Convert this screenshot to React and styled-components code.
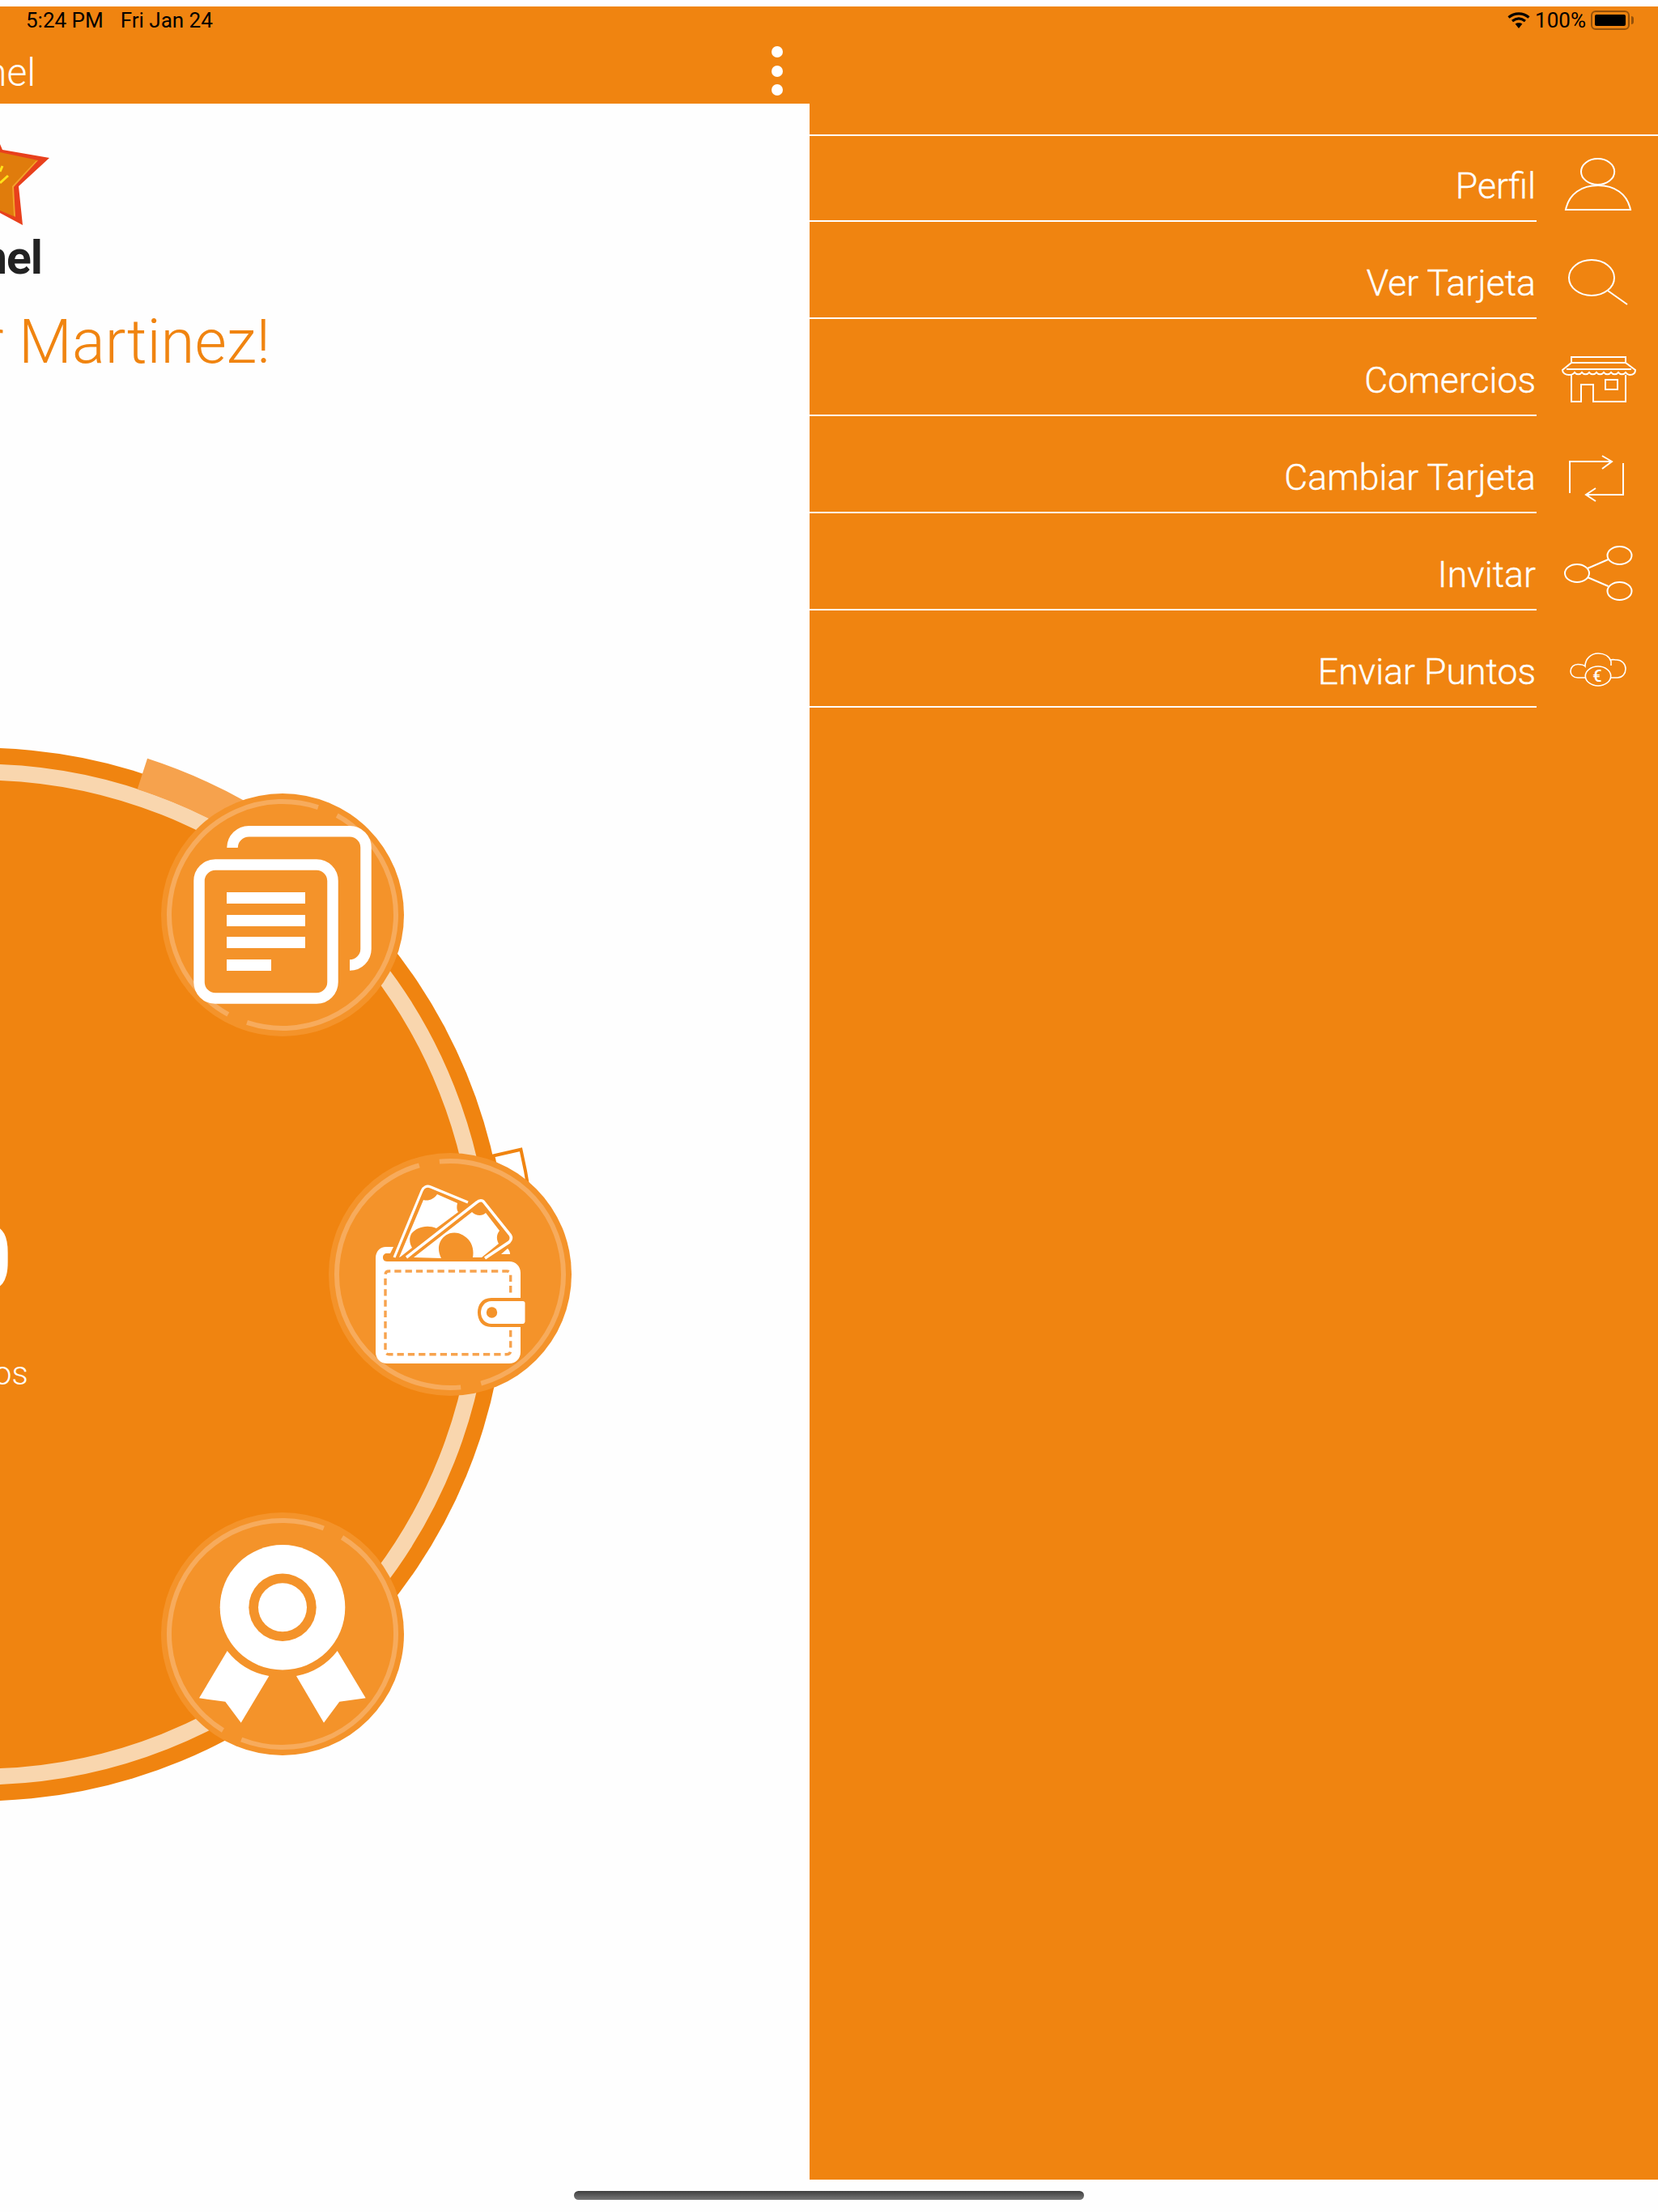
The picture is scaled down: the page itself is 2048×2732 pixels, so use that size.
import React from "react";
import styled, { createGlobalStyle } from "styled-components";

const ORANGE = "#f08410";
const BADGE = "#f4932a";

const Global = createGlobalStyle`
  html, body { margin: 0; padding: 0; background: #fff; }
  * { box-sizing: border-box; }
`;

const Page = styled.div`
  width: 2048px;
  height: 2732px;
  padding-top: 8px;
  background: #fefefe;
  font-family: Roboto, "Liberation Sans", sans-serif;
  overflow: hidden;
`;
const Shell = styled.div`
  height: 2684px;
  background: ${ORANGE};
  display: flex;
  flex-direction: column;
`;
const StatusBar = styled.div`
  height: 34px;
  padding: 0 35px 0 32px;
  display: flex;
  align-items: center;
  justify-content: space-between;
  color: #000;
  font-size: 26px;
  line-height: 32px;
`;
const StatusGroup = styled.div`
  display: flex;
  align-items: center;
  gap: ${(p) => p.$gap}px;
`;
const Battery = styled.div`
  position: relative;
  width: 48px;
  height: 24px;
  padding: 3px;
  border: 2px solid rgba(0, 0, 0, 0.38);
  border-radius: 6px;
  &::before {
    content: "";
    display: block;
    height: 100%;
    background: #000;
    border-radius: 2px;
  }
  &::after {
    content: "";
    position: absolute;
    right: -7px;
    top: 5px;
    width: 3px;
    height: 10px;
    background: rgba(0, 0, 0, 0.38);
    border-radius: 0 3px 3px 0;
  }
`;
const Body = styled.div`
  flex: 1;
  min-height: 0;
  display: grid;
  grid-template-columns: 1000px 1048px;
`;
const LeftPane = styled.div`
  display: flex;
  flex-direction: column;
  overflow: hidden;
`;
const AppBar = styled.div`
  height: 86px;
  flex: none;
  padding: 5px 33px 0 0;
  display: flex;
  align-items: center;
  justify-content: space-between;
`;
const AppTitle = styled.div`
  margin: 4px 0 0 -18px;
  font-size: 48px;
  font-weight: 300;
  line-height: 76px;
  color: #fff;
`;
const Kebab = styled.div`
  display: flex;
  flex-direction: column;
  gap: 9.5px;
`;
const Dot = styled.span`
  display: block;
  width: 14px;
  height: 14px;
  border-radius: 50%;
  background: #fff;
`;
const Content = styled.div`
  position: relative;
  flex: 1;
  background: #fefefe;
  overflow: hidden;
`;
const Logo = styled.svg`
  display: block;
  width: 64px;
  height: 110px;
  margin-top: 42px;
`;
const Brand = styled.div`
  margin: 14px 0 0 -23px;
  height: 50px;
  font-size: 57px;
  font-weight: 700;
  line-height: 50px;
  letter-spacing: -1px;
  color: #222;
`;
const Greeting = styled.h1`
  margin: 33px 0 0 -21px;
  font-size: 76px;
  font-weight: 300;
  line-height: 90px;
  color: ${ORANGE};
  white-space: nowrap;
`;
const Dial = styled.div`
  position: absolute;
  left: 0;
  top: 654px;
  width: 720px;
  height: 1450px;
`;
const DialArt = styled.svg`
  display: block;
  width: 720px;
  height: 1450px;
`;
const Points = styled.div`
  position: absolute;
  left: -46px;
  top: 717px;
  font-size: 110px;
  font-weight: 400;
  line-height: 112px;
  color: #fff;
`;
const PointsLabel = styled.div`
  position: absolute;
  left: -8px;
  top: 893px;
  font-size: 40px;
  font-weight: 300;
  line-height: 44px;
  color: #fff;
`;
const Drawer = styled.nav`
  padding-top: 124px;
`;
const TopRule = styled.div`
  height: 2px;
  background: #fff;
`;
const MenuRow = styled.div`
  display: grid;
  grid-template-columns: 898px 150px;
  height: ${(p) => (p.$first ? 106 : 120)}px;
`;
const MenuLabel = styled.div`
  display: flex;
  align-items: flex-end;
  justify-content: flex-end;
  padding: 0 1px 16px 0;
  border-bottom: 2px solid #fff;
  font-size: 44.6px;
  font-weight: 300;
  line-height: 52px;
  color: #fff;
  -webkit-text-stroke: 0.35px #fff;
`;
const MenuIcon = styled.svg`
  display: block;
  width: 150px;
  height: 120px;
  margin-top: ${(p) => (p.$first ? -14 : 0)}px;
  fill: none;
  stroke: #fff;
  stroke-width: 2;
`;
const IconGlyph = styled.text`
  fill: #fff;
  stroke: none;
  font-family: Roboto, sans-serif;
  font-size: 20px;
  font-weight: 500;
  text-anchor: middle;
`;
const HomeBar = styled.div`
  width: 630px;
  height: 11px;
  margin: 14px auto 0;
  border-radius: 6px;
  background: linear-gradient(#3e3e3e, #777);
`;

const icons = {
  perfil: (
    <>
      <ellipse cx="75.6" cy="58" rx="20.6" ry="16" />
      <path d="M36 105 C40 85 56 75 76 75 C96 75 112 85 116 105 Z" />
    </>
  ),
  tarjeta: (
    <>
      <ellipse cx="68" cy="69" rx="28" ry="22" />
      <path d="M88 85 L112 102" />
    </>
  ),
  comercios: (
    <>
      <path d="M43 53 V47 H110 V53" />
      <path d="M43 54 H110 L122 63 C122 67 119 69 115 69 C112 69 111 67 110 66 C108 69 103 69 101 66 C99 69 94 69 92 66 C90 69 85 69 83 66 C81 69 76 69 74 66 C72 69 67 69 65 66 C63 69 58 69 56 66 C54 69 49 69 47 66 C45 69 42 69 40 69 C36 69 32 67 32 63 Z" />
      <path d="M37 62 H117" />
      <path d="M43 69 V102 H55 V81 H70 V102 H110 V69" />
      <rect x="85" y="75" width="15" height="12" />
    </>
  ),
  cambiar: (
    <>
      <path d="M41 95 V56 H93 M81 49 L93 56 L81 65" />
      <path d="M107 58 V97 H61 M73 89 L61 97 L73 105" />
    </>
  ),
  invitar: (
    <>
      <ellipse cx="102.5" cy="52" rx="15" ry="11" />
      <ellipse cx="50" cy="74" rx="15" ry="11" />
      <ellipse cx="102.5" cy="96" rx="15" ry="11" />
      <path d="M63 68 L88.5 57 M63 79 L88.5 90" />
    </>
  ),
  puntos: (
    <g strokeWidth="1.6">
      <path d="M60 83 H51 C45 83 42 79 42 75 C42 70 46 66.5 51 66.5 C54 66.5 58 67 60 69 C60 60 67 53 76 53 C84 53 90 57 92 63 V68 M92 61 C94 60 96 61 99 61 C105 61 110 66 110 72 C110 78 106 83 100 83 H91" />
      <ellipse cx="76" cy="81" rx="15.7" ry="12" />
      <IconGlyph x="75" y="88">€</IconGlyph>
    </g>
  ),
};

const rows = [
  ["Perfil", "perfil"],
  ["Ver Tarjeta", "tarjeta"],
  ["Comercios", "comercios"],
  ["Cambiar Tarjeta", "cambiar"],
  ["Invitar", "invitar"],
  ["Enviar Puntos", "puntos"],
];

const polar = (cx, cy, r, deg) => {
  const a = (deg * Math.PI) / 180;
  return [cx + r * Math.sin(a), cy - r * Math.cos(a)];
};

const RingArcs = ({ cx, cy, gap }) => {
  const r = 140;
  const half = 5.2;
  const p = (d) => polar(cx, cy, r, d).map((v) => v.toFixed(2)).join(" ");
  return (
    <g fill="none" stroke="#f7ab5c" strokeWidth="6">
      <path d={`M${p(gap + half)} A${r} ${r} 0 0 1 ${p(gap + 180 - half)}`} />
      <path d={`M${p(gap + 180 + half)} A${r} ${r} 0 0 1 ${p(gap + 360 - half)}`} />
    </g>
  );
};

const Badge = ({ cx, cy, gap, children }) => (
  <g>
    <circle cx={cx} cy={cy} r="150" fill={BADGE} />
    <RingArcs cx={cx} cy={cy} gap={gap} />
    <g transform={`translate(${cx - 150} ${cy - 150})`}>{children}</g>
  </g>
);

const DocIcon = () => (
  <g>
    <g fill="none" stroke="#fff" strokeWidth="13.5">
      <path d="M88 67 A20.5 20.5 0 0 1 108.5 46.7 H233 A20 20 0 0 1 253 67 V192 A20 20 0 0 1 233 212" />
      <rect x="47" y="88" width="165" height="165" rx="20" />
    </g>
    <g fill="#fff">
      <rect x="81" y="122" width="97" height="14" />
      <rect x="81" y="150" width="97" height="14" />
      <rect x="81" y="177" width="97" height="14" />
      <rect x="81" y="205" width="55" height="14" />
    </g>
  </g>
);

const WalletIcon = () => (
  <g>
    <path
      fill="#fff"
      d="M80 116 H71 C63 116 58 122 58 130 V246 C58 254 64 260 72 260 H223 C231 260 237 254 237 246 V215 H201 C189 215 184 206 184 197 C184 188 189 179 201 179 H237 V148 C237 140 231 134 223 134 H72 C68 134 67 131 67 129 C67 126 69 124 72 124 H76 Z"
    />
    <path
      fill="#fff"
      d="M201 183 H240 C241.5 183 242.5 184 242.5 185.5 V208 C242.5 209.5 241.5 211 240 211 H201 C193 211 188 204 188 197 C188 190 193 183 201 183 Z"
    />
    <circle cx="201.5" cy="197" r="6.7" fill={BADGE} />
    <path
      fill="none"
      stroke="#f7a34e"
      strokeWidth="3.4"
      strokeDasharray="8.3 5"
      d="M224.7 219 V244 Q224.7 248.7 220 248.7 H74.5 Q70 248.7 70 244 V150.5 Q70 146 74.5 146 H220 Q224.7 146 224.7 150.5 V175"
    />
    <path
      fill="none"
      stroke="#fff"
      strokeWidth="3.2"
      d="M81 129 L115 47 C117 42 121 40 126 42 L172 61"
    />
    <path
      fill="#fff"
      d="M87 129 L117 58 C123 60 130 57 134 51 L159 62 C158 66 158 70 160 73 L133 93 C121 88 108 92 102 100 C99 106 100 112 103 117 L89 128 Z"
    />
    <path
      fill="none"
      stroke="#fff"
      strokeWidth="3.6"
      d="M96 129 L183 61 C186 58 190 58 192 61 L224 101 C226 104 226 107 223 110 L193 130"
    />
    <path
      fill="#fff"
      d="M105 129 L177 73 C182 78 190 78 194 74 L211 96 C207 101 207 107 210 112 L189 129 H178 C180 118 176 108 168 103 C160 97 150 97 143 103 C135 110 134 120 139 130 Z"
    />
    <path fill="#fff" d="M213 125 L221 118 C223 120 224 122 224 125 Z" />
  </g>
);

const MedalIcon = () => (
  <g>
    <circle cx="150" cy="117.3" r="77.3" fill="#fff" />
    <circle cx="150" cy="117.3" r="41.7" fill={BADGE} />
    <circle cx="150" cy="117.3" r="30" fill="#fff" />
    <path
      fill="#fff"
      d="M81.7 171 L47 229.3 L79.3 233.7 L98.7 259.7 L133.3 202 A84 84 0 0 1 81.7 171 Z"
    />
    <path
      fill="#fff"
      d="M217.7 171 L252.7 229.3 L220.3 233.7 L201 259.7 L167 202 A84 84 0 0 0 217.7 171 Z"
    />
  </g>
);

const Ribbon = () => {
  const [ax, ay] = polar(-25, 792, 630, 18);
  const [bx, by] = polar(-25, 792, 670, 18);
  const [cx, cy] = polar(-25, 792, 670, 38);
  const [dx, dy] = polar(-25, 792, 630, 38);
  return (
    <path
      fill="#f6a24d"
      d={`M${ax} ${ay} L${bx} ${by} A670 670 0 0 1 ${cx} ${cy} L${dx} ${dy} A630 630 0 0 0 ${ax} ${ay} Z`}
    />
  );
};

const WhiteTab = () => {
  const [ax, ay] = polar(-25, 792, 651, 77);
  const [bx, by] = polar(-25, 792, 686, 77);
  const [cx, cy] = polar(-25, 792, 686, 88);
  const [dx, dy] = polar(-25, 792, 651, 88);
  return (
    <path
      fill="#fff"
      stroke={ORANGE}
      strokeWidth="4"
      d={`M${ax} ${ay} L${bx} ${by} A686 686 0 0 1 ${cx} ${cy} L${dx} ${dy} A651 651 0 0 0 ${ax} ${ay} Z`}
    />
  );
};

export default function App() {
  return (
    <>
      <Global />
      <Page>
        <Shell>
          <StatusBar>
            <StatusGroup $gap={21}>
              <span>5:24 PM</span>
              <span>Fri Jan 24</span>
            </StatusGroup>
            <StatusGroup $gap={6}>
              <svg width="28" height="20" viewBox="0 0 28 20">
                <g fill="none" stroke="#000" strokeWidth="3.2">
                  <path d="M1.5 6.5 C9 0.2 19 0.2 26.5 6.5" />
                  <path d="M6 11 C11 7 17 7 22 11" />
                </g>
                <path d="M9.6 14.6 C12 12.8 16 12.8 18.4 14.6 L14 20 Z" fill="#000" />
              </svg>
              <span>100%</span>
              <Battery />
            </StatusGroup>
          </StatusBar>
          <Body>
            <LeftPane>
              <AppBar>
                <AppTitle>nel</AppTitle>
                <Kebab>
                  <Dot />
                  <Dot />
                  <Dot />
                </Kebab>
              </AppBar>
              <Content>
                <Logo viewBox="0 0 64 110">
                  <path d="M0 8 L3 15 L61 25 L23 60 L28 108 L0 93 Z" fill="#e8401c" />
                  <path d="M0 18 L47 28 L15 60 L19 98 L0 90 Z" fill="#e07c0c" />
                  <path d="M15 60 L44 29 L47 28 L17 61 L19 98 L17 96 Z" fill="#f3a32a" />
                  <path d="M0 42 L3 35 M0 56 L10 47" stroke="#ffe21a" strokeWidth="3" fill="none" />
                </Logo>
                <Brand>nel</Brand>
                <Greeting>r Martinez!</Greeting>
                <Dial>
                  <DialArt viewBox="0 0 720 1450">
                    <WhiteTab />
                    <circle cx="-25" cy="792" r="650.5" fill={ORANGE} />
                    <circle cx="-25" cy="792" r="620.5" fill="none" stroke="#f9d6ae" strokeWidth="20" />
                    <Ribbon />
                    <Badge cx={349} cy={348} gap={23.5}>
                      <DocIcon />
                    </Badge>
                    <Badge cx={556} cy={792} gap={-10.6}>
                      <WalletIcon />
                    </Badge>
                    <Badge cx={349} cy={1236} gap={26.5}>
                      <MedalIcon />
                    </Badge>
                  </DialArt>
                  <Points>0</Points>
                  <PointsLabel>os</PointsLabel>
                </Dial>
              </Content>
            </LeftPane>
            <Drawer>
              <TopRule />
              {rows.map(([label, key], i) => (
                <MenuRow key={key} $first={i === 0}>
                  <MenuLabel>{label}</MenuLabel>
                  <MenuIcon viewBox="0 0 150 120" $first={i === 0}>
                    {icons[key]}
                  </MenuIcon>
                </MenuRow>
              ))}
            </Drawer>
          </Body>
        </Shell>
        <HomeBar />
      </Page>
    </>
  );
}
